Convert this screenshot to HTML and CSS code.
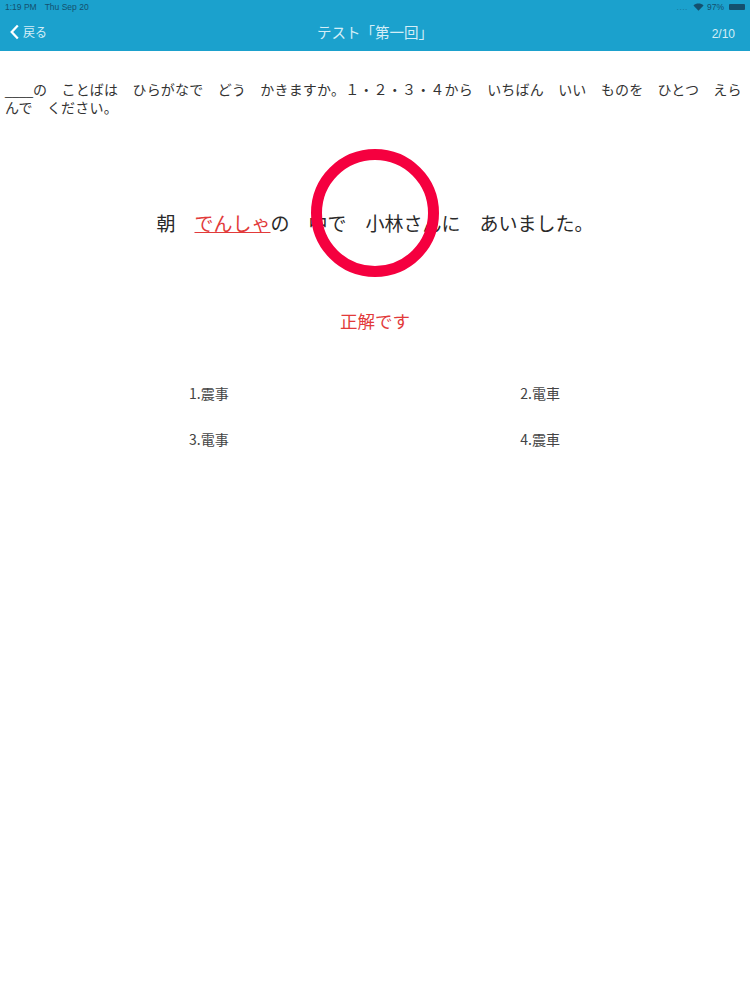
FILE: index.html
```
<!DOCTYPE html>
<html lang="ja">
<head>
<meta charset="utf-8">
<title>テスト「第一回」</title>
<link rel="stylesheet" href="styles.css">
</head>
<body>
<header class="header">
  <div class="status">
    <div class="status-left"><span>1:19 PM</span><span>Thu Sep 20</span></div>
    <div class="status-right">
      <span class="signal">....</span>
      <svg class="wifi" viewBox="0 0 12 9" width="11" height="8"><path d="M6 8.6 L0.3 2.8 C3.4 -0.2 8.6 -0.2 11.7 2.8 Z" fill="#14506e"/></svg>
      <span>97%</span>
      <span class="battery"></span>
    </div>
  </div>
  <nav class="nav">
    <div class="back">
      <svg viewBox="0 0 11 17" width="11" height="16"><path d="M9 1.5 L2.5 8.5 L9 15.5" fill="none" stroke="#fff" stroke-width="2.4"/></svg>
      <span>戻る</span>
    </div>
    <div class="title">テスト「第一回」</div>
    <div class="count">2/10</div>
  </nav>
</header>
<main class="main">
  <p class="question"><span class="blank">____</span>の　ことばは　ひらがなで　どう　かきますか。１・２・３・４から　いちばん　いい　ものを　ひとつ　えらんで　ください。</p>
  <div class="stage">
    <p class="sentence">朝　<span class="target">でんしゃ</span>の　中で　小林さんに　あいました。</p>
    <div class="ring"></div>
  </div>
  <p class="verdict">正解です</p>
  <div class="choices">
    <div class="choice">1.震事</div>
    <div class="choice">2.電車</div>
    <div class="choice">3.電事</div>
    <div class="choice">4.震車</div>
  </div>
</main>
</body>
</html>
```
FILE: styles.css
```
* { box-sizing: border-box; }
html, body { margin: 0; padding: 0; }
body {
  width: 750px;
  height: 1000px;
  overflow: hidden;
  background: #fff;
  color: #222;
  font-family: "Noto Sans CJK JP", "Liberation Sans", sans-serif;
}
.header {
  height: 51px;
  background: #1ba1cd;
  color: #d4eef7;
  display: flex;
  flex-direction: column;
}
.status {
  height: 14px;
  padding: 0 5px;
  display: flex;
  justify-content: space-between;
  align-items: center;
  font-family: "Liberation Sans", sans-serif;
  font-size: 8.5px;
  color: #14506e;
}
.status-left { display: flex; gap: 8px; }
.status-right { display: flex; align-items: center; gap: 3px; }
.signal { letter-spacing: 0.5px; opacity: 0.5; margin-right: 2px; }
.battery {
  width: 16px;
  height: 6px;
  margin-left: 2px;
  border-radius: 1px;
  background: #14506e;
}
.nav {
  flex: 1;
  display: grid;
  grid-template-columns: 1fr auto 1fr;
  align-items: center;
  padding: 0 15px 3px 9px;
}
.back {
  display: flex;
  align-items: center;
  gap: 3px;
  padding-top: 1px;
  font-size: 12px;
}
.title {
  font-size: 14.5px;
  padding-left: 6px;
}
.count {
  padding-top: 5px;
  text-align: right;
  font-family: "Liberation Sans", sans-serif;
  font-size: 12px;
}
.main { padding: 29px 5px 0; }
.question {
  margin: 0;
  font-size: 14px;
  line-height: 18px;
  letter-spacing: 0.2px;
  color: #333;
}
.blank {
  font-family: "Liberation Sans", sans-serif;
  font-size: 12.6px;
  line-height: 1;
  letter-spacing: 0;
}
.stage {
  position: relative;
  height: 160px;
  margin-top: 2px;
  display: flex;
  justify-content: center;
  padding-top: 91px;
}
.sentence {
  margin: 0;
  font-size: 19px;
  line-height: 28px;
  white-space: nowrap;
  color: #2a2a2a;
}
.target {
  color: #e23a3a;
  text-decoration: underline;
  text-underline-offset: 1px;
  text-decoration-thickness: 1px;
}
.ring {
  position: absolute;
  left: 306px;
  top: 31px;
  width: 128px;
  height: 128px;
  border: 11px solid #f5003f;
  border-radius: 50%;
}
.verdict {
  margin: 30px 0 0;
  text-align: center;
  font-size: 17.5px;
  line-height: 26px;
  color: #e23a3a;
}
.choices {
  margin: 48px 0 0;
  padding: 0 185px 0 184px;
  display: grid;
  grid-template-columns: 1fr auto;
  row-gap: 24px;
  font-size: 14px;
  line-height: 22px;
  color: #444;
}
```
